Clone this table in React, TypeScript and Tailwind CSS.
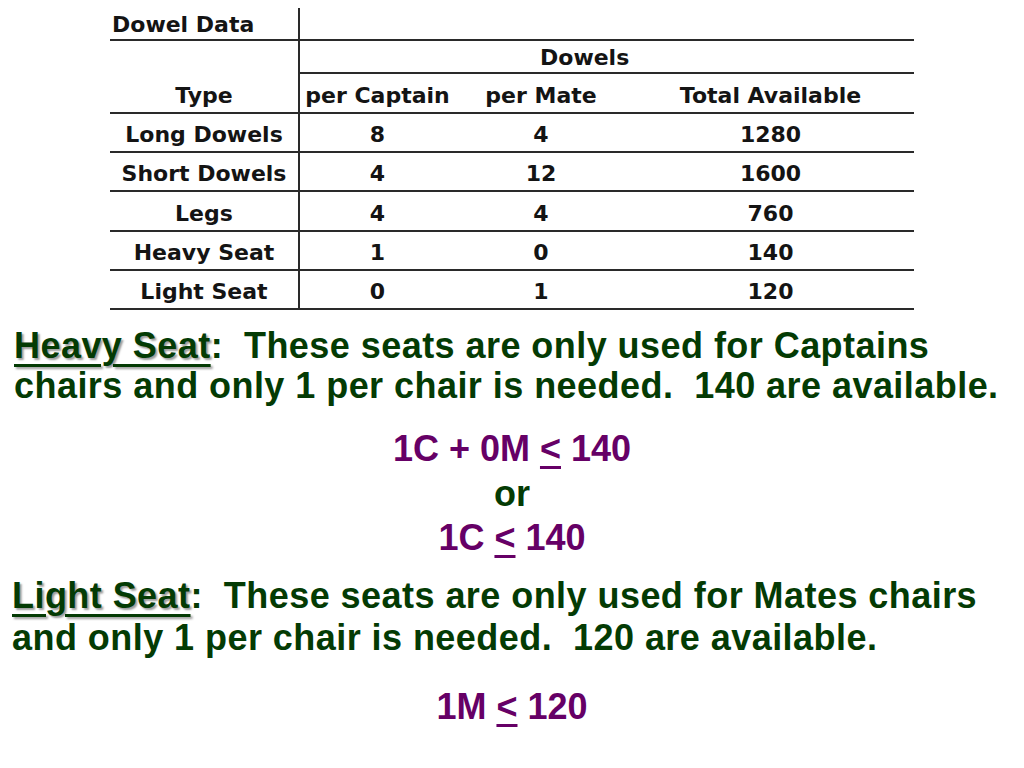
const rows = [
  { type: "Long Dowels", captain: "8", mate: "4", total: "1280", h: "h-[39px]" },
  { type: "Short Dowels", captain: "4", mate: "12", total: "1600", h: "h-[39px]" },
  { type: "Legs", captain: "4", mate: "4", total: "760", h: "h-[40px]" },
  { type: "Heavy Seat", captain: "1", mate: "0", total: "140", h: "h-[39px]" },
  { type: "Light Seat", captain: "0", mate: "1", total: "120", h: "h-[39px]" },
]

const cell = "flex justify-center border-b-2 border-[#2a2a2a]"

const DowelTable = () => (
  <div className="ml-[110px] mt-[8px] grid w-[804px] grid-cols-[190px_155px_172px_287px] [font-family:'DejaVu_Sans',sans-serif] text-[22px] font-bold text-[#141414]">
    {/* title row */}
    <div className="flex h-[33px] items-center border-b-2 border-r-2 border-[#2a2a2a] pl-[2px] pt-[1px]">Dowel Data</div>
    <div className="col-span-3 h-[33px] border-b-2 border-[#2a2a2a]" />

    {/* group header */}
    <div className="h-[33px] border-r-2 border-[#2a2a2a]" />
    <div className="col-span-3 flex h-[33px] items-center border-b-2 border-[#2a2a2a] pl-[240px] pt-[1px]">Dowels</div>

    {/* column headers */}
    <div className={`${cell} h-[40px] items-end border-r-2 pb-0`}>Type</div>
    <div className={`${cell} h-[40px] items-end pb-0`}>per Captain</div>
    <div className={`${cell} h-[40px] items-end pb-0`}>per Mate</div>
    <div className={`${cell} h-[40px] items-end pb-0`}>Total Available</div>

    {rows.map((r) => (
      <div key={r.type} className="contents">
        <div className={`${cell} ${r.h} items-center border-r-2 pt-[4px]`}>{r.type}</div>
        <div className={`${cell} ${r.h} items-center pt-[4px]`}>{r.captain}</div>
        <div className={`${cell} ${r.h} items-center pt-[4px]`}>{r.mate}</div>
        <div className={`${cell} ${r.h} items-center pt-[4px]`}>{r.total}</div>
      </div>
    ))}
  </div>
)

const Label = ({ children }: { children: string }) => (
  <span className="underline decoration-[3px] underline-offset-[6px] [text-shadow:2px_2px_2px_#9c9c9c]">{children}</span>
)

const Le = () => <span className="underline decoration-[3px] underline-offset-[5px]">&lt;</span>

export default function App() {
  return (
    <div className="h-[768px] w-[1024px] overflow-hidden bg-white [font-family:'Liberation_Sans',Arial,sans-serif] font-bold">
      <DowelTable />

      <p className="mt-[16px] whitespace-pre pl-[14px] text-[36px] leading-[40px] tracking-[0.45px] text-[#043b04]">
        <Label>Heavy Seat</Label>{":  These seats are only used for Captains"}
        <br />
        {"chairs and only 1 per chair is needed.  140 are available."}
      </p>

      <div className="mt-[21px] flex flex-col items-center text-[36px] leading-[44.5px] text-[#660066]">
        <div>
          1C + 0M <Le /> 140
        </div>
        <div className="text-[#043b04]">or</div>
        <div>
          1C <Le /> 140
        </div>
      </div>

      <p className="mt-[14px] whitespace-pre pl-[12px] text-[36px] leading-[42px] tracking-[0.45px] text-[#043b04]">
        <Label>Light Seat</Label>{":  These seats are only used for Mates chairs"}
        <br />
        {"and only 1 per chair is needed.  120 are available."}
      </p>

      <div className="mt-[26px] flex justify-center text-[36px] leading-[44px] text-[#660066]">
        <div>
          1M <Le /> 120
        </div>
      </div>
    </div>
  )
}
